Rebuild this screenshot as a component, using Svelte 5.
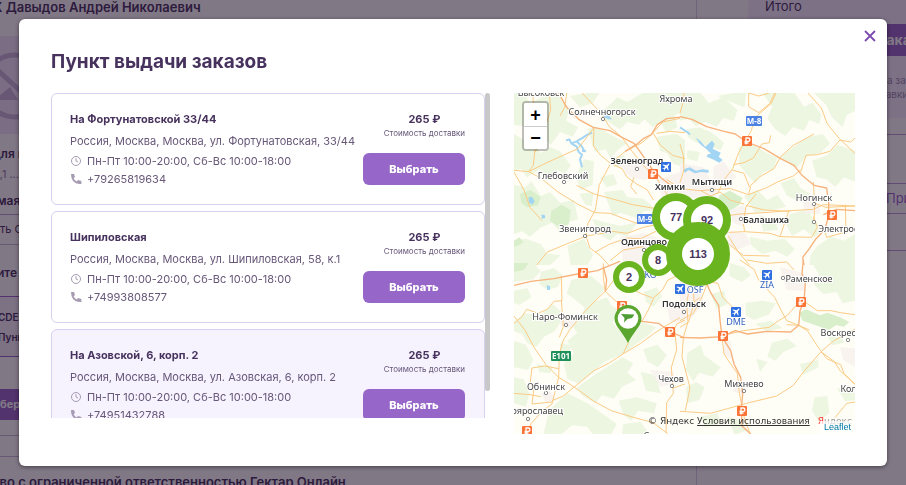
<script lang="ts">
    type Point = { name: string; address: string; hours: string; phone: string; price: number }

    const points: Point[] = [
        { name: 'На Фортунатовской 33/44', address: 'Россия, Москва, Москва, ул. Фортунатовская, 33/44', hours: 'Пн-Пт 10:00-20:00, Сб-Вс 10:00-18:00', phone: '+79265819634', price: 265 },
        { name: 'Шипиловская', address: 'Россия, Москва, Москва, ул. Шипиловская, 58, к.1', hours: 'Пн-Пт 10:00-20:00, Сб-Вс 10:00-18:00', phone: '+74993808577', price: 265 },
        { name: 'На Азовской, 6, корп. 2', address: 'Россия, Москва, Москва, ул. Азовская, 6, корп. 2', hours: 'Пн-Пт 10:00-20:00, Сб-Вс 10:00-18:00', phone: '+74951432788', price: 265 },
    ]

    let active = $state(2)
    let open = $state(true)
    let scrollTop = $state(0)
    let viewHeight = $state(325)
    let fullHeight = $state(354)

    // four map tiles, three units to a map pixel
    const tiles = [
        {
            x: -12, y: -9,
            forest: 'M12 9H42L60 40 95 22 140 9 178 58 168 92 205 112 188 140 150 126 122 165 95 132 112 96 75 84 62 112 12 104ZM262 66L292 52 322 22 352 36 398 9H525V62L494 76 502 112 470 128 452 98 428 112 404 88 386 104 352 96 330 118 290 92ZM12 132L42 150 62 142 92 190 122 172 150 184 182 226 164 252 140 240 122 270 90 238 50 262 34 236 12 242ZM232 116L262 110 302 134 350 160 326 178 302 204 286 178 256 186ZM12 284L46 292 64 274 92 318 120 306 150 338 192 330 204 388 176 396 150 424 126 398 90 414 60 440 36 424 12 432ZM282 306L338 300 352 322 400 326 440 360 402 364 380 384 330 368 308 378ZM246 386L290 398 332 408 384 396 350 440 322 432 300 452 268 432ZM12 452L48 446 92 462 110 490 152 496 120 525H12ZM172 468L222 446 250 496 232 525H182ZM440 140L500 132 525 150V232L490 222 472 190 450 182ZM222 208L252 214 248 284 214 300 196 262ZM180 18L232 9H268L248 40 210 52ZM310 200L344 196 338 226 314 232ZM208 312L250 306 246 348 226 344ZM270 262L310 252 322 282 290 292Z',
            park: 'M30 312L62 300 92 322 84 346 52 352 34 340ZM124 362L156 344 182 360 176 404 146 410 120 392ZM12 452L28 442 40 456 24 468 12 470Z',
            city: 'M330 225L380 212 420 235 440 262 400 270 360 262ZM440 270L525 240V345L460 330ZM330 440L400 430 460 450 470 500 400 525H340Z',
            water: 'M56 322L66 320 74 334 66 344 56 336ZM94 374L104 374 106 384 96 386ZM276 70L296 76 306 88 294 88 282 80Z',
            river: 'M168 152L178 148 184 160 200 154 220 142 232 134 246 128M184 160L200 170 206 186 216 194 210 208 216 232M200 154L214 168 222 180M216 182L228 184',
            roads: 'M12 241L56 245 92 264 144 306 206 344 254 368 302 370 342 386 386 402M56 245L98 224 150 200 204 176 232 140 252 112M56 245L70 226 78 150 74 92 68 9M252 112L250 168 272 196 302 220 268 284 256 360 234 400 228 438 240 474 272 498 296 525M302 220L346 184 396 158 424 134 458 96 525 82M302 220L336 236 352 262 380 282 412 300 430 330M200 286L252 312 312 328 368 344 438 356M228 438L268 432 306 424 352 430 400 412 440 404M216 9L270 66 300 112 336 142 360 176 396 222 442 268 482 330M118 9L122 60 100 130 76 186M12 246L42 300 60 352 96 392M80 525L112 486 170 462 228 438M256 486L300 462 352 444 392 446 438 424M440 130L480 124 525 128M430 130L450 164 488 196 525 206M170 9L164 52 150 78M372 262L362 290 380 312M470 268L500 290 525 296M300 512L340 480 400 470',
            highways: 'M146 9L170 52 206 88 250 112 300 122 336 142 372 160 394 190 410 214 428 240 454 264 482 286M346 184L378 164 400 146 424 134M424 134L442 104 470 86 525 80',
        },
        {
            x: 498, y: -9,
            forest: 'M0 9H62L86 40 130 22 172 60 162 92 130 84 110 110 76 96 48 108 24 86 0 92ZM248 9H344L372 50 398 38 424 74 418 102 388 90 372 122 338 112 316 138 286 118 262 86 276 50ZM402 9H527V62L500 74 488 112 456 82 438 44ZM20 118L58 112 96 128 132 158 122 180 84 168 50 158 24 142ZM176 172L212 158 254 186 292 204 280 236 248 248 226 280 202 256 178 226ZM300 202L342 170 382 142 428 132 450 160 420 190 382 196 348 236 322 218ZM396 212L442 196 472 164 527 182V276L492 262 466 290 438 268 410 262ZM192 318L232 300 262 330 292 314 318 350 270 362 226 368ZM238 376L284 386 294 420 250 424ZM330 372L384 358 402 392 436 420 402 442 372 418 336 438 318 402ZM412 468L452 440 492 452 527 430V525H388L392 494ZM208 440L262 452 314 446 344 478 322 500 286 482 246 492 214 466ZM302 280L342 264 362 294 392 312 352 332 320 316ZM22 180L60 186 52 214 20 206ZM112 18L160 9H198L194 52 162 40Z',
            park: 'M118 316L150 302 188 324 178 344 146 366 124 350 112 334Z',
            city: 'M100 230L130 214 150 240 170 262 130 284 100 270ZM0 220L70 232 112 300 104 330 0 320ZM150 360L190 346 206 380 190 410 158 398ZM140 424L196 430 214 462 170 480 142 460ZM370 330L420 344 420 372 372 370Z',
            water: 'M46 142L62 154 76 170 96 152 104 162 98 176 122 188 116 200 128 210 118 218 98 208 80 200 84 192 94 192 78 176 62 164ZM10 238L30 232 48 242 68 238 86 240 86 248 64 246 44 250 26 240 14 248Z',
            river: 'M0 112L12 120 24 128 30 134',
            roads: 'M288 9L274 40 242 68 224 84 214 122 192 160 176 188 158 236 132 270 112 312M206 9L206 50 236 68 270 40 284 9M384 9L424 54 442 102 480 148 525 190M525 144L512 156 480 150 450 184 412 194 378 196 362 246M402 132L340 166 302 200 282 236 240 260 206 292M212 290L206 312M0 296L60 302 110 298 152 296 206 314 262 292 292 276 340 258 362 240M156 240L192 250 208 290M228 312L198 350 190 400 194 425M120 380L180 372 252 368 330 362 400 358 430 344 525 348M198 346L252 360 330 364M146 427L194 425 270 430 300 440 395 442 412 412 400 380M326 364L300 440M400 276L404 340 402 398M404 340L438 352 525 348M145 438L172 482 208 525M148 464L190 496 268 498M12 9L8 42 0 70M0 162L10 196 12 240 0 278M272 136L268 158 246 162 220 204 192 218 160 224M496 344L498 426 440 442 430 410M62 302L92 318 120 306 150 330 192 342M206 9L236 18 268 9',
            highways: 'M0 80L36 88 80 110 132 124 166 132 200 156 252 176 302 206 342 226 366 256 402 286 440 294 446 340 446 378 434 420 408 446 388 476 368 502 372 525M430 374L470 358 525 362',
        },
        {
            x: -12, y: 501,
            forest: 'M12 9H70L92 34 70 58 12 66ZM92 36L132 24 158 46 144 80 114 90 88 72ZM12 186L44 160 92 166 128 132 164 166 134 214 102 230 78 262 52 250 36 222 12 214ZM184 60L244 48 284 84 258 122 222 142 192 116 170 100ZM170 170L222 172 286 126 324 148 308 188 354 240 396 186 438 202 416 224 338 282 282 306 252 336 204 370 172 356 162 312 192 280 172 242 202 220ZM200 384L252 346 338 292 370 310 352 338 378 360 336 380 312 416 276 406 256 430 218 408ZM12 242L48 254 70 300 54 330 12 322ZM12 352L42 358 58 402 48 440 12 430ZM128 440L172 400 232 430 284 466 320 492 302 525H250L232 500 186 496 152 525H100L112 474ZM400 268L442 254 470 286 444 322 412 304ZM392 336L438 346 452 400 408 392ZM326 422L380 412 440 430 432 460 384 452 364 482 342 466ZM402 96L440 82 456 110 430 140 408 126ZM150 250L182 256 176 310 150 300ZM226 136L290 112 312 150 270 186 210 184ZM12 92L52 84 64 112 28 134 12 128ZM82 312L128 322 120 340 88 336ZM340 492L392 486 420 525H336Z',
            park: 'M12 9L56 9 42 30 12 36Z',
            city: 'M150 180L182 170 200 188 178 204 152 196ZM92 400L122 394 138 420 110 430ZM420 330L490 336 492 372 452 380ZM470 140L525 120V190L480 184Z',
            water: 'M110 76L120 78 120 90 112 90Z',
            river: '',
            roads: 'M280 10L280 54 286 94 252 126 218 162 180 208 160 240 148 282 146 352 136 392 126 432 96 454 62 492 50 525M12 168L46 212 72 262 108 314 146 352 194 382 252 424 304 452 370 472 430 488 478 525M126 422L160 408 194 380 252 332 296 310 342 280 392 250 430 222 470 196 525 164M356 246L340 280M12 190L36 170 50 148 84 160 112 148 132 124 156 122 154 48M154 120L160 200 148 232M146 326L104 318 66 324 60 372 72 384 66 432 126 426M525 36L474 60 456 92 432 112 414 152 396 184M350 80L392 100 428 114M494 206L500 270 484 322 490 400 470 428 468 525M525 180L500 192 494 206M286 94L310 62 350 42M12 400L60 404 92 410M286 94L318 124 342 130M525 372L490 384',
            highways: 'M12 76L62 64 132 56 202 42 262 32 330 4M342 138L372 172 396 184 446 190 478 214 525 234M280 20L290 60 286 94',
        },
        {
            x: 498, y: 501,
            forest: 'M150 9L192 22 212 46 186 66 148 48ZM196 128L248 122 288 130 266 164 222 180 198 166ZM92 102L132 92 142 132 110 146ZM396 9H527V122L488 130 470 96 430 102 402 74 416 42ZM226 192L272 182 308 204 260 214ZM276 248L322 236 350 258 310 276 286 302 262 290ZM22 278L62 254 72 286 122 322 98 350 58 338 40 364 18 330ZM228 296L262 306 240 336ZM360 312L414 300 416 322 370 344ZM18 382L48 366 74 382 58 420 22 430ZM404 412L442 408 448 458 416 486 396 450ZM470 384L527 396V420L496 424ZM444 232L480 220 492 248 458 256ZM142 470L180 480 202 510 164 525ZM60 470L112 460 122 490 76 502Z',
            park: 'M356 158L378 148 420 166 442 158 480 172 508 186 492 200 468 196 446 210 420 200 390 190 368 182Z',
            city: 'M300 22L372 40 376 92 320 90ZM130 232L152 244 160 300 132 284ZM0 40L60 60 70 130 30 180 0 180ZM156 362L200 370 190 402 160 396ZM480 262L527 266V322L490 300Z',
            water: '',
            river: '',
            roads: 'M180 0L222 28 236 60 262 88 284 112 304 152 320 182 352 194 382 212 412 258 440 296 482 314 492 340 525 374M200 0L260 10 320 6 342 30M128 226L190 212 268 202 296 182 322 166 352 132M320 194L356 196 388 210M372 124L412 152 452 152 482 158 525 164M0 454L92 460 142 446 200 430 290 408 340 376 372 334 424 274 462 242 525 208M126 232L132 282 152 312 172 340 178 400 186 440M32 64L20 130 24 186 10 232 6 290 30 384 16 452M40 70L42 130 26 186 0 202M78 64L114 70 128 112 162 146M424 276L462 304 482 334 525 372M466 472L500 430 525 426M186 452L202 500 212 525M0 182L40 160 64 116 82 70M0 130L42 126 60 112',
            highways: 'M76 60L92 98 116 136 120 180 126 230 152 272 162 312 182 352 188 402 184 452 186 498 212 522M0 232L60 234 126 230 166 212 202 222 262 214 332 216 356 196 360 152 372 124 376 70 366 42 370 0',
        },
    ]

    const towns = [
        { name: 'Высоковск', x: 27, y: 3, dot: [25, -3] },
        { name: 'Яхрома', x: 162, y: 9, dot: [158, -2] },
        { name: 'Солнечногорск', x: 88, y: 22, dot: [89, 26] },
        { name: 'Зеленоград', x: 123, y: 71, dot: [123, 76], bold: true },
        { name: 'Глебовский', x: 49, y: 86, dot: [50, 89] },
        { name: 'Химки', x: 156, y: 97, bold: true },
        { name: 'Мытищи', x: 198, y: 92, dot: [198, 97], bold: true },
        { name: 'Ногинск', x: 300, y: 108, dot: [300, 111] },
        { name: 'Балашиха', x: 252, y: 130, dot: [227, 126], bold: true },
        { name: 'Электросталь', x: 334, y: 139, dot: [300, 129] },
        { name: 'Звенигород', x: 71, y: 139, dot: [71, 143] },
        { name: 'Одинцово', x: 130, y: 152, dot: [130, 157], bold: true },
        { name: 'Раменское', x: 295, y: 189, dot: [269, 185] },
        { name: 'Подольск', x: 170, y: 214, dot: [170, 219], bold: true },
        { name: 'Наро-Фоминск', x: 51, y: 227, dot: [52, 232] },
        { name: 'Воскресенск', x: 334, y: 243, dot: [334, 247] },
        { name: 'Чехов', x: 157, y: 289, dot: [158, 293] },
        { name: 'Обнинск', x: 32, y: 297, dot: [32, 300] },
        { name: 'Михнево', x: 230, y: 294, dot: [230, 298] },
        { name: 'Коломна', x: 346, y: 299 },
        { name: 'Малоярославец', x: 14, y: 321, dot: [14, 326] },
        { name: 'Серпухов', x: 150, y: 346 },
    ]
    const tolls = [[139, 81], [233, 48], [318, 122], [69, 180], [108, 213], [156, 239], [287, 209], [209, 243], [13, 338], [228, 318]]
    const airports = [
        { x: 152, y: 74, code: '' },
        { x: 253, y: 182, code: 'ZIA' },
        { x: 222, y: 219, code: 'DME' },
        { x: 166, y: 196, code: 'OSF' },
    ]
    const shields = [
        { text: 'М-8', x: 240, y: 28, w: 16, color: '#4c82e4' },
        { text: 'М-9', x: 131, y: 126, w: 16, color: '#4c82e4' },
        { text: 'E101', x: 47, y: 263, w: 20, color: '#1f8f5c' },
    ]
    const clusters = [
        { count: 77, x: 162, y: 124, size: 48, hole: 32 },
        { count: 92, x: 193, y: 127, size: 48, hole: 32 },
        { count: 2, x: 115, y: 184, size: 32, hole: 20 },
        { count: 8, x: 144, y: 167, size: 32, hole: 20 },
        { count: 113, x: 184, y: 161, size: 64, hole: 32 },
    ]
</script>

<div class="page">
    <div class="order">
        <h1>Х Давыдов Андрей Николаевич</h1>
        <div class="thumb">
            <svg viewBox="0 0 70 70" aria-hidden="true">
                <circle cx="35" cy="35" r="31" />
                <path d="M12 14L58 56" />
                <path class="hill" d="M14 49L30 36 38 49Z" />
            </svg>
        </div>
        <p class="name">для писем</p>
        <p class="weight">0,1 ....</p>
        <p class="sum">мая цена</p>
        <p class="row">ть Скидку</p>
        <p class="choose">ите способ</p>
        <div class="delivery">
            <p>CDEK</p>
            <p>Пункт</p>
        </div>
        <div class="pick">бер</div>
        <div class="gap"></div>
        <p class="legal">тво с ограниченной ответственностью Гектар Онлайн</p>
    </div>
    <div class="side">
        <div class="total">
            <p>Итого</p>
            <div class="checkout">Оформить заказ</div>
            <small>на заказ<br />тавки</small>
        </div>
        <div class="promo"></div>
        <div class="apply">Применить</div>
        <div class="end"></div>
    </div>
</div>

{#if open}
    <div class="overlay">
        <div class="modal" role="dialog" aria-labelledby="title">
            <button class="close" aria-label="Закрыть" onclick={() => (open = false)}>
                <svg viewBox="0 0 12 12"><path d="M1 1L11 11M11 1L1 11" /></svg>
            </button>
            <h2 id="title">Пункт выдачи заказов</h2>
            <div class="content">
                <div class="list">
                    <div class="scroll" bind:clientHeight={viewHeight}
                        onscroll={(e) => { scrollTop = e.currentTarget.scrollTop; fullHeight = e.currentTarget.scrollHeight }}>
                        {#each points as point, i}
                            <div class="card" class:active={active === i}>
                                <div class="info">
                                    <h3>{point.name}</h3>
                                    <p class="address">{point.address}</p>
                                    <p class="line">
                                        <svg class="clock" viewBox="0 0 12 12"><circle cx="6" cy="6" r="4.5" /><path d="M6 3.2V6L8 7" /></svg>
                                        {point.hours}
                                    </p>
                                    <p class="line">
                                        <svg class="phone" viewBox="0 0 12 12"><path d="M1 1H4L5 4 3.6 5.2Q4.6 7.4 6.8 8.4L8 7 11.4 8V11H9.5Q1 10.4 1 1Z" /></svg>
                                        {point.phone}
                                    </p>
                                </div>
                                <div class="buy">
                                    <div class="price">
                                        <b>{point.price} ₽</b>
                                        <span>Стоимость доставки</span>
                                    </div>
                                    <button onclick={() => (active = i)}>Выбрать</button>
                                </div>
                            </div>
                        {/each}
                    </div>
                    <div class="track">
                        <div class="bar" style="height: {(viewHeight / fullHeight) * 100}%; margin-top: {(scrollTop * viewHeight) / fullHeight}px"></div>
                    </div>
                </div>

                <div class="map">
                    <svg class="ground" viewBox="0 0 341 341" role="img" aria-label="Карта">
                        <g transform="scale(.333333)">
                            {#each tiles as t}
                                <g transform="translate({t.x} {t.y})">
                                    <path fill="#edf6e1" d={t.forest} />
                                    <path fill="#d9efcb" d={t.park} />
                                    <path fill="#f8f3ef" d={t.city} />
                                    <path fill="#a2d4f3" d={t.water} />
                                    <path class="river" d={t.river} />
                                    <path class="road" d={t.roads} />
                                    <path class="highway" d={t.highways} />
                                </g>
                            {/each}
                        </g>
                        {#each towns as town}
                            {#if town.dot}
                                <circle class="dot" cx={town.dot[0]} cy={town.dot[1]} r="1.7" />
                            {/if}
                            <text class="town" class:bold={town.bold} x={town.x} y={town.y}>{town.name}</text>
                        {/each}
                        {#each tolls as [x, y]}
                            <g transform="translate({x} {y})">
                                <rect x="-5" y="-5" width="10" height="10" rx="1" fill="#fb7336" />
                                <path class="ruble" d="M-1 3.5V-3H1.2A1.7 1.7 0 0 1 1.2 .5H-2.5M-2.5 2.2H1.5" />
                            </g>
                        {/each}
                        {#each airports as a}
                            <g transform="translate({a.x} {a.y})">
                                <rect x="-5" y="-5" width="10" height="10" rx="1" fill="#2f6fe0" />
                                <path fill="#fff" d="M3.5-3.5L2.2-3.2 .8-1.8-3-2.6-3.6-2-.8-.3-2.2 1.2-3.5 1-3.8 1.5-2 2.1-1.4 3.8-.9 3.4-1 2.2 .4 .8 2 3.6 2.6 3 1.9-.8 3.2-2.2Z" />
                                {#if a.code}
                                    <text class="code" x={a.code === 'OSF' ? 15 : 0} y={a.code === 'OSF' ? 4 : 13}>{a.code}</text>
                                {/if}
                            </g>
                        {/each}
                        <text class="code" x="134" y="185">VKO</text>
                        {#each shields as s}
                            <rect x={s.x - s.w / 2} y={s.y - 5} width={s.w} height="10" rx="1" fill={s.color} />
                            <text class="shield" x={s.x} y={s.y + 3}>{s.text}</text>
                        {/each}
                    </svg>

                    {#each clusters as c}
                        <button class="cluster" style="left: {c.x}px; top: {c.y}px; width: {c.size}px; height: {c.size}px; border-width: {(c.size - c.hole) / 2}px">{c.count}</button>
                    {/each}
                    <button class="pin" aria-label="Пункт выдачи">
                        <svg viewBox="0 0 28 38">
                            <path fill="#5aa62e" d="M14 0A13.5 13.5 0 0 0 .5 13.5C.5 21 8 26 14 38 20 26 27.5 21 27.5 13.5A13.5 13.5 0 0 0 14 0Z" />
                            <circle cx="14" cy="13.5" r="10.3" fill="#fff" />
                            <path fill="#4e9e35" d="M7 9L20.5 9.5 18 13 13.5 14 10 17.5 10.5 13Z" />
                        </svg>
                    </button>

                    <div class="zoom">
                        <button aria-label="Приблизить">+</button>
                        <button aria-label="Отдалить">−</button>
                    </div>
                    <div class="copyright">
                        <span>© Яндекс <a href="#terms">Условия использования</a></span>
                        <span class="yandex"><i>Я</i>ндекс</span>
                    </div>
                    <a class="leaflet" href="#leaflet">Leaflet</a>
                </div>
            </div>
        </div>
    </div>
{/if}

<style>
    :global(body) {
        margin: 0;
        overflow: hidden;
        font-family: Inter, "Liberation Sans", sans-serif;
        color: #46325d;
    }

    h1, h2, h3, p {
        margin: 0;
    }

    button {
        font-family: inherit;
        padding: 0;
        border: 0;
        cursor: pointer;
    }

    .page {
        display: grid;
        grid-template-columns: minmax(0, 697fr) minmax(0, 209fr);
        height: 100vh;
        overflow: hidden;
        white-space: nowrap;
        font-size: 13px;
    }

    .order {
        border-right: 1px solid #d9cde8;
    }

    .order h1, .name, .weight {
        margin-left: -7px;
    }

    h1 {
        font-size: 13px;
        font-weight: 600;
        line-height: 14px;
        padding-bottom: 22px;
    }

    .thumb {
        height: 98px;
        background: #f1e8fb;
    }

    .thumb svg {
        width: 70px;
        height: 70px;
        margin: 15px 0 0 -20px;
        fill: none;
        stroke: #c5b5d8;
        stroke-width: 5;
    }

    .thumb .hill {
        fill: #c5b5d8;
        stroke: none;
    }

    .name {
        font-weight: 600;
        font-size: 12px;
        line-height: 28px;
        padding-top: 6px;
    }

    .weight {
        line-height: 12px;
        font-size: 11px;
        color: #8d7fa0;
        padding-bottom: 11px;
    }

    .sum {
        font-weight: 600;
        font-size: 12px;
        line-height: 20px;
        padding-bottom: 3px;
        margin-left: -3px;
        border-bottom: 1px solid #b7a4cc;
    }

    .row {
        line-height: 29px;
        border-bottom: 1px solid #c9b9dc;
        font-size: 11px;
    }

    .choose {
        padding-top: 4px;
        margin-left: -3px;
        line-height: 47px;
        font-size: 12px;
        font-weight: 600;
    }

    .delivery {
        height: 61px;
        border: solid #9766c9;
        border-width: 1px 0;
        font-size: 10px;
        font-weight: 600;
        line-height: 20px;
        padding-top: 10px;
        box-sizing: border-box;
        background: #f5f0fb;
    }

    .delivery p {
        margin-left: -2px;
    }

    .pick {
        margin-top: 32px;
        line-height: 31px;
        background: #9766c9;
        color: #fff;
        font-weight: 700;
        font-size: 11px;
    }

    .gap {
        height: 20px;
        margin: 15px 0;
        border: solid #c9b9dc;
        border-width: 1px 0;
    }

    .legal {
        margin-left: -7px;
        font-weight: 600;
        line-height: 20px;
    }

    .side {
        padding-left: 51px;
    }

    .total {
        height: 118px;
        background: #f6f0ff;
        padding-left: 17px;
        box-sizing: border-box;
        overflow: hidden;
    }

    .total p {
        font-size: 13px;
        line-height: 12px;
        padding-bottom: 12px;
    }

    .checkout {
        line-height: 32px;
        background: #9766c9;
        color: #fff;
        font-weight: 700;
        font-size: 14px;
        padding-left: 36px;
    }

    .total small {
        display: block;
        padding: 17px 0 0 116px;
        font-size: 10px;
        line-height: 14px;
        color: #9a8cab;
    }

    .promo {
        height: 48px;
        margin-top: 16px;
        border: solid #b79bd8;
        border-width: 1px 0;
    }

    .apply {
        line-height: 29px;
        padding-left: 138px;
        color: #9766c9;
        border-bottom: 1px solid #b79bd8;
        overflow: hidden;
    }

    .end {
        height: 36px;
        border-bottom: 1px solid #b79bd8;
    }

    .overlay {
        position: fixed;
        inset: 0;
        display: grid;
        padding: 19px;
        background: rgba(26, 10, 34, 0.55);
    }

    .modal {
        position: relative;
        background: #fff;
        border-radius: 6px;
        padding: 30px 32px;
        box-shadow: 0 1px 4px rgba(0, 0, 0, 0.5);
    }

    .close {
        position: absolute;
        top: 11px;
        right: 11px;
        width: 12px;
        height: 12px;
        background: none;
    }

    .close svg {
        display: block;
        stroke: #7c4bb0;
        stroke-width: 1.8;
    }

    h2 {
        font-size: 19px;
        line-height: 26px;
        font-weight: 700;
        margin-bottom: 18px;
    }

    .content {
        display: grid;
        grid-template-columns: minmax(0, 439fr) minmax(0, 341fr);
        gap: 24px;
        align-items: start;
    }

    .list {
        display: flex;
        height: 325px;
    }

    .scroll {
        flex: 1;
        overflow-y: auto;
        scrollbar-width: none;
    }

    .track {
        width: 5px;
    }

    .bar {
        background: #c8c8c8;
        border-radius: 3px;
    }

    .card {
        display: flex;
        justify-content: space-between;
        box-sizing: border-box;
        border: 1px solid #d9cff0;
        border-radius: 6px;
        padding: 17px 19px 16px 18px;
        margin-bottom: 6px;
        font-size: 11px;
        line-height: 18px;
        color: #675779;
        white-space: nowrap;
    }

    .card.active {
        background: #f6f2fe;
    }

    .info {
        min-width: 0;
    }

    h3 {
        font-size: 11px;
        line-height: 16px;
        font-weight: 700;
        color: #46325d;
    }

    .address {
        margin: 5px 0 2px;
    }

    .line {
        display: flex;
        align-items: center;
        gap: 5px;
    }

    .line svg {
        width: 12px;
        height: 12px;
    }

    .clock {
        fill: none;
        stroke: #a69bb2;
    }

    .phone {
        fill: #a69bb2;
    }

    .buy {
        width: 102px;
        display: flex;
        flex-direction: column;
        align-items: flex-end;
        flex-shrink: 0;
    }

    .price {
        display: flex;
        flex-direction: column;
        align-items: center;
        font-size: 8px;
        line-height: 12px;
        margin-bottom: 14px;
    }

    .price b {
        font-size: 11px;
        line-height: 16px;
        font-weight: 700;
        color: #46325d;
    }

    .buy button {
        width: 100%;
        height: 32px;
        border-radius: 6px;
        background: #9766c9;
        color: #fff;
        font-size: 11px;
        font-weight: 800;
    }

    .map {
        position: relative;
        aspect-ratio: 1;
        overflow: hidden;
        background: #fefdf6;
    }

    .ground {
        display: block;
        width: 100%;
        height: 100%;
    }

    .road, .highway, .river {
        fill: none;
        stroke: #fbcb85;
        stroke-width: 3;
        stroke-linejoin: round;
    }

    .highway {
        stroke: #f8b27c;
        stroke-width: 4;
    }

    .river {
        stroke: #a2d4f3;
        stroke-width: 6;
    }

    .dot {
        fill: #fff;
        stroke: #666;
        stroke-width: 0.8;
    }

    .town, .code, .shield {
        font-family: "Noto Sans", "Open Sans", sans-serif;
        font-size: 9px;
        text-anchor: middle;
        fill: #444;
        stroke: #fff;
        stroke-width: 2px;
        paint-order: stroke;
    }

    .bold {
        font-weight: 600;
        fill: #333;
    }

    .code {
        fill: #3564bd;
    }

    .shield {
        font-size: 8px;
        font-weight: 700;
        fill: #fff;
        stroke: none;
    }

    .ruble {
        fill: none;
        stroke: #fff;
        stroke-width: 1.3;
    }

    .cluster {
        position: absolute;
        transform: translate(-50%, -50%);
        border: solid #6ab41f;
        border-radius: 50%;
        background: #fff;
        color: #46325d;
        font: bold 11px "Liberation Sans", sans-serif;
        display: grid;
        place-items: center;
    }

    .pin {
        position: absolute;
        left: 100px;
        top: 212px;
        width: 28px;
        height: 38px;
        background: none;
    }

    .pin svg {
        display: block;
    }

    .zoom {
        position: absolute;
        left: 8px;
        top: 8px;
        display: grid;
        border: 2px solid rgba(0, 0, 0, 0.25);
        border-radius: 4px;
        overflow: hidden;
    }

    .zoom button {
        width: 23px;
        height: 23px;
        background: #fff;
        color: #000;
        font: bold 18px/20px "Liberation Sans", sans-serif;
    }

    .zoom button + button {
        border-top: 1px solid #ccc;
    }

    .copyright {
        position: absolute;
        right: 3px;
        bottom: 6px;
        display: flex;
        gap: 8px;
        font: 9px/14px "DejaVu Sans", sans-serif;
        color: #333;
        white-space: nowrap;
    }

    .copyright a {
        color: inherit;
    }

    .yandex {
        color: #999;
    }

    .yandex i {
        color: #f33;
        font-style: normal;
    }

    .leaflet {
        position: absolute;
        right: 0;
        bottom: 0;
        padding: 0 4px;
        font: 9px/13px "Liberation Sans", sans-serif;
        color: #0078a8;
        text-decoration: none;
        background: rgba(255, 255, 255, 0.7);
    }
</style>
